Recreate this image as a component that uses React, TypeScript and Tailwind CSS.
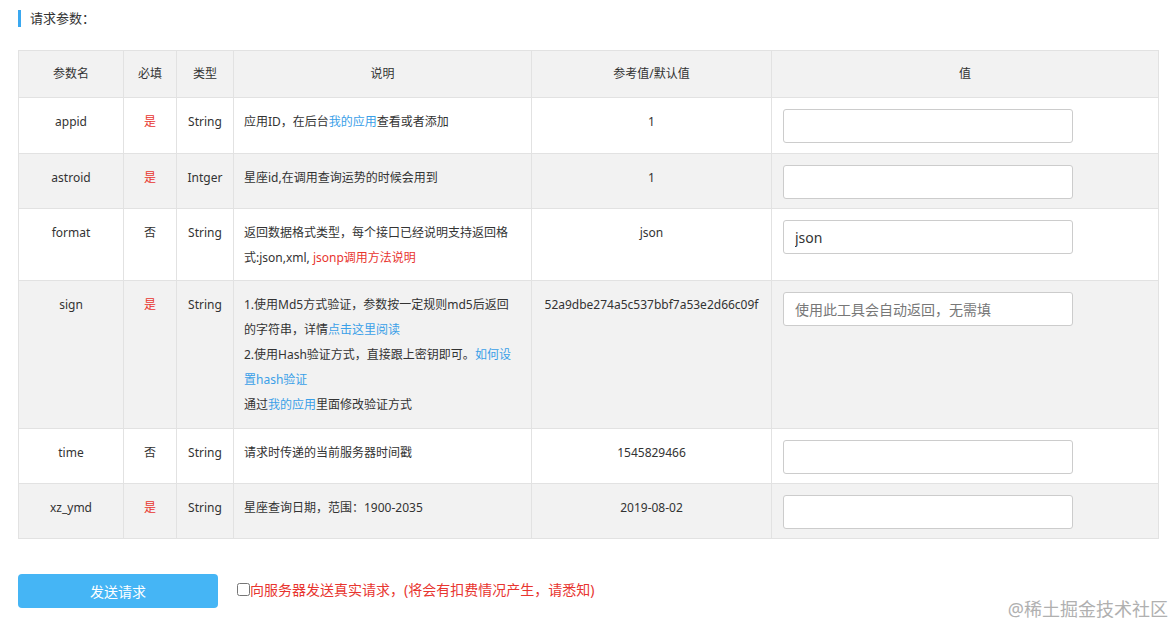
import React from "react";

interface Param {
  name: string;
  required: boolean;
  type: string;
  desc: React.ReactNode;
  ref: string;
  value?: string;
  placeholder?: string;
  height: string;
  shaded: boolean;
}

const Link = ({ children }: { children: React.ReactNode }) => (
  <a className="text-[#3aa0e8] cursor-pointer">{children}</a>
);

const params: Param[] = [
  {
    name: "appid",
    required: true,
    type: "String",
    desc: (
      <>
        应用ID，在后台<Link>我的应用</Link>查看或者添加
      </>
    ),
    ref: "1",
    height: "h-[56px]",
    shaded: false,
  },
  {
    name: "astroid",
    required: true,
    type: "Intger",
    desc: "星座id,在调用查询运势的时候会用到",
    ref: "1",
    height: "h-[55px]",
    shaded: true,
  },
  {
    name: "format",
    required: false,
    type: "String",
    desc: (
      <>
        返回数据格式类型，每个接口已经说明支持返回格式:json,xml,{" "}
        <span className="text-[#e8352f]">jsonp调用方法说明</span>
      </>
    ),
    ref: "json",
    value: "json",
    height: "h-[72px]",
    shaded: false,
  },
  {
    name: "sign",
    required: true,
    type: "String",
    desc: (
      <>
        1.使用Md5方式验证，参数按一定规则md5后返回的字符串，详情<Link>点击这里阅读</Link>
        <br />
        2.使用Hash验证方式，直接跟上密钥即可。<Link>如何设置hash验证</Link>
        <br />
        通过<Link>我的应用</Link>里面修改验证方式
      </>
    ),
    ref: "52a9dbe274a5c537bbf7a53e2d66c09f",
    placeholder: "使用此工具会自动返回，无需填",
    height: "h-[148px]",
    shaded: true,
  },
  {
    name: "time",
    required: false,
    type: "String",
    desc: "请求时传递的当前服务器时间戳",
    ref: "1545829466",
    height: "h-[55px]",
    shaded: false,
  },
  {
    name: "xz_ymd",
    required: true,
    type: "String",
    desc: "星座查询日期，范围：1900-2035",
    ref: "2019-08-02",
    height: "h-[55px]",
    shaded: true,
  },
];

const cell = "border border-[#e2e2e2] align-top pt-[11px] leading-[25px]";

export default function App() {
  return (
    <div
      className="relative w-[1174px] h-[620px] bg-white text-[12px] text-[#333]"
      style={{ fontFamily: '"Noto Sans", "Noto Sans CJK SC", sans-serif' }}
    >
      {/* Section title */}
      <div className="flex items-center h-[17px] mt-[10px] ml-[18px]">
        <span className="w-[3px] h-[17px] bg-[#3aa8f0]" />
        <span className="ml-[9px] text-[13px] text-[#333]">请求参数：</span>
      </div>

      {/* Params table */}
      <table className="ml-[18px] mt-[23px] w-[1140px] border-collapse table-fixed">
        <colgroup>
          <col className="w-[105px]" />
          <col className="w-[53px]" />
          <col className="w-[57px]" />
          <col className="w-[298px]" />
          <col className="w-[240px]" />
          <col className="w-[387px]" />
        </colgroup>
        <thead>
          <tr className="h-[47px] bg-[#f2f2f2] text-[12px]">
            <th className="border border-[#e2e2e2] font-normal">参数名</th>
            <th className="border border-[#e2e2e2] font-normal">必填</th>
            <th className="border border-[#e2e2e2] font-normal">类型</th>
            <th className="border border-[#e2e2e2] font-normal">说明</th>
            <th className="border border-[#e2e2e2] font-normal">参考值/默认值</th>
            <th className="border border-[#e2e2e2] font-normal">值</th>
          </tr>
        </thead>
        <tbody>
          {params.map((p) => (
            <tr key={p.name} className={`${p.height} ${p.shaded ? "bg-[#f2f2f2]" : "bg-white"}`}>
              <td className={`${cell} text-center`}>{p.name}</td>
              <td className={`${cell} text-center ${p.required ? "text-[#e8352f]" : ""}`}>
                {p.required ? "是" : "否"}
              </td>
              <td className={`${cell} text-center`}>{p.type}</td>
              <td className={`${cell} pl-[10px] pr-[16px]`}>{p.desc}</td>
              <td className={`${cell} text-center`}>{p.ref}</td>
              <td className="border border-[#e2e2e2] align-top pt-[11px] pl-[11px]">
                <input
                  defaultValue={p.value}
                  placeholder={p.placeholder}
                  className="w-[290px] h-[34px] rounded-[3px] border border-[#ccc] bg-white px-[11px] text-[14px] text-[#333] placeholder:text-[#777] outline-none"
                />
              </td>
            </tr>
          ))}
        </tbody>
      </table>

      {/* Submit */}
      <div className="flex items-center ml-[18px] mt-[35px]">
        <button className="w-[200px] h-[34px] rounded-[4px] bg-[#45b5f5] text-white text-[14px]">
          发送请求
        </button>
        <label className="flex items-center ml-[19px] text-[14px] text-[#e8352f] -mt-[4px]">
          <input type="checkbox" className="w-[13px] h-[13px] m-0" />
          向服务器发送真实请求，(将会有扣费情况产生，请悉知)
        </label>
      </div>

      {/* Watermark */}
      <div className="absolute right-[6px] bottom-[10px] text-[18px] leading-[22px] text-[#b0b0b0]">
        @稀土掘金技术社区
      </div>
    </div>
  );
}
